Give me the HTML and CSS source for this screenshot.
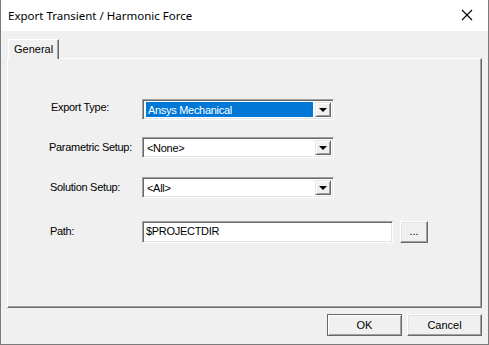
FILE: index.html
```html
<!DOCTYPE html>
<html lang="en">
<head>
  <meta charset="UTF-8">
  <title>Export Transient / Harmonic Force</title>
  <link rel="stylesheet" href="styles.css">
</head>
<body>
  <div class="dialog">
    <!-- Title bar -->
    <div class="title-bar">
      <span class="title">Export Transient / Harmonic Force</span>
      <svg class="close" width="12" height="12" viewBox="0 0 12 12">
        <path d="M1 1 L11 11 M11 1 L1 11" stroke="#000" stroke-width="1.1" fill="none"/>
      </svg>
    </div>

    <div class="content">
      <!-- Tab strip -->
      <div class="tabs">
        <div class="tab">General</div>
      </div>

      <!-- Tab page -->
      <div class="panel">
        <div class="row row-export">
          <label class="label label-export">Export Type:</label>
          <div class="combo">
            <div class="combo-text"><span class="selected">Ansys Mechanical</span></div>
            <div class="combo-btn"><span class="arrow"></span></div>
          </div>
        </div>

        <div class="row row-param">
          <label class="label">Parametric Setup:</label>
          <div class="combo">
            <div class="combo-text">&lt;None&gt;</div>
            <div class="combo-btn"><span class="arrow"></span></div>
          </div>
        </div>

        <div class="row row-solution">
          <label class="label label-solution">Solution Setup:</label>
          <div class="combo">
            <div class="combo-text">&lt;All&gt;</div>
            <div class="combo-btn"><span class="arrow"></span></div>
          </div>
        </div>

        <div class="row row-path">
          <label class="label label-solution">Path:</label>
          <div class="textbox">$PROJECTDIR</div>
          <button class="btn browse-btn">...</button>
        </div>
      </div>

      <!-- OK / Cancel -->
      <div class="footer">
        <button class="btn default-btn">OK</button>
        <button class="btn">Cancel</button>
      </div>
    </div>
  </div>
</body>
</html>
```

FILE: styles.css
```css
/* Page */
body {
  margin: 0;
  padding: 0;
  background: #ffffff;
  font-family: 'Liberation Sans', Arial, sans-serif;
  font-size: 11px;
  letter-spacing: -0.3px;
  color: #000;
}

/* Window frame */
.dialog {
  width: 489px;
  height: 345px;
  box-sizing: border-box;
  border: 1px solid #7a7a7a;
  border-top: none;
  display: flex;
  flex-direction: column;
  background: #f0f0f0;
}

/* Title bar */
.title-bar {
  height: 31px;
  background: #ffffff;
  display: flex;
  align-items: center;
  justify-content: space-between;
  padding: 0 15px 0 7px;
  flex-shrink: 0;
}

.title {
  font-family: 'Noto Sans', 'Open Sans', sans-serif;
  font-size: 11.5px;
  letter-spacing: 0;
  color: #000;
  margin-top: -1px;
}

.close {
  margin-top: -1px;
}

/* Body */
.content {
  flex: 1;
  padding: 8px 6px 0 6px;
  display: flex;
  flex-direction: column;
}

.tabs {
  display: flex;
  padding-left: 1px;
  height: 19px;
  position: relative;
  z-index: 1;
}

.tab {
  width: 51px;
  height: 20px;
  box-sizing: border-box;
  border-top: 1px solid #ffffff;
  border-left: 1px solid #ffffff;
  border-right: 1px solid #696969;
  box-shadow: inset -1px 0 #a0a0a0;
  background: #f0f0f0;
  padding: 3px 0 0 5px;
  letter-spacing: 0;
}

/* Tab page with 3D edges */
.panel {
  width: 475px;
  height: 250px;
  box-sizing: border-box;
  border-top: 1px solid #ffffff;
  border-left: 1px solid #ffffff;
  border-right: 1px solid #696969;
  border-bottom: 1px solid #696969;
  box-shadow: inset -1px -1px #a0a0a0;
  display: flex;
  flex-direction: column;
  padding-left: 134px;
}

.row {
  display: flex;
  align-items: center;
  height: 21px;
  position: relative;
}

.row-export { margin-top: 40px; }
.row-param { margin-top: 17px; }
.row-solution { margin-top: 19px; }
.row-path { margin-top: 23px; height: 22px; }

.label {
  position: absolute;
  left: -93px;
  top: 4px;
  white-space: nowrap;
}

.label-export { left: -91px; top: 2px; }
.label-solution { left: -92px; }

/* Combo box */
.combo {
  width: 192px;
  height: 21px;
  box-sizing: border-box;
  border-top: 1px solid #a0a0a0;
  border-left: 1px solid #a0a0a0;
  border-right: 1px solid #ffffff;
  border-bottom: 1px solid #ffffff;
  box-shadow: inset 1px 1px #696969, inset -1px -1px #e3e3e3;
  background: #ffffff;
  display: flex;
  padding: 2px;
}

.combo-text {
  flex: 1;
  padding: 1px 0 0 2px;
  line-height: 14px;
  white-space: nowrap;
}

.selected {
  display: block;
  background: #0078d7;
  color: #ffffff;
  margin: -1px 2px 0 -1px;
  padding: 1px 0 0 2px;
  height: 14px;
}

.combo-btn {
  width: 16px;
  box-sizing: border-box;
  background: #f0f0f0;
  border-top: 1px solid #e3e3e3;
  border-left: 1px solid #e3e3e3;
  border-right: 1px solid #696969;
  border-bottom: 1px solid #696969;
  box-shadow: inset 1px 1px #ffffff, inset -1px -1px #a0a0a0;
  display: flex;
  align-items: center;
  justify-content: center;
}

.arrow {
  width: 0;
  height: 0;
  border-left: 4px solid transparent;
  border-right: 4px solid transparent;
  border-top: 4px solid #000;
  margin-top: 1px;
}

/* Path edit box */
.textbox {
  width: 251px;
  height: 22px;
  box-sizing: border-box;
  border-top: 1px solid #a0a0a0;
  border-left: 1px solid #a0a0a0;
  border-right: 1px solid #ffffff;
  border-bottom: 1px solid #ffffff;
  box-shadow: inset 1px 1px #696969, inset -1px -1px #e3e3e3;
  background: #ffffff;
  padding: 3px 0 0 3px;
}

/* Push buttons */
.btn {
  font-family: 'Liberation Sans', Arial, sans-serif;
  font-size: 11px;
  color: #000;
  background: #f0f0f0;
  width: 75px;
  height: 22px;
  box-sizing: border-box;
  border-top: 1px solid #ffffff;
  border-left: 1px solid #ffffff;
  border-right: 1px solid #696969;
  border-bottom: 1px solid #696969;
  box-shadow: inset -1px -1px #a0a0a0, inset 1px 1px #e3e3e3;
  padding: 0;
}

.browse-btn {
  width: 28px;
  margin-left: 7px;
  padding-bottom: 2px;
}

.default-btn {
  border: 1px solid #696969;
  box-shadow: inset 1px 1px #ffffff, inset -1px -1px #a0a0a0;
}

.footer {
  display: flex;
  justify-content: flex-end;
  gap: 5px;
  margin-top: 6px;
  padding-right: 0;
}
```
